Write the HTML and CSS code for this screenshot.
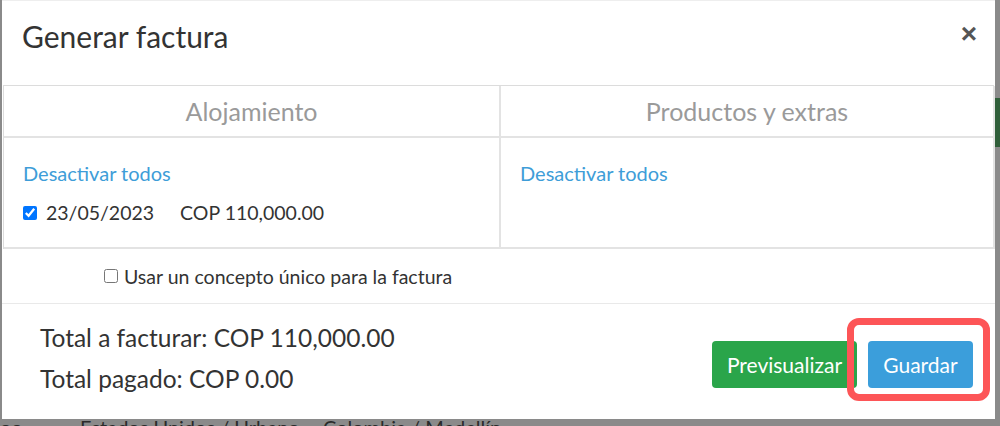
FILE: index.html
```html
<!DOCTYPE html>
<html lang="es">
<head>
<meta charset="utf-8">
<title>Generar factura</title>
<link rel="stylesheet" href="styles.css">
</head>
<body>
<div class="screen">
  <div class="gutter-left"></div>
  <div class="modal">
    <div class="modal-header">
      <h4 class="modal-title">Generar factura</h4>
      <button class="close" type="button">&times;</button>
    </div>
    <div class="tabs">
      <div class="th">Alojamiento</div>
      <div class="th">Productos y extras</div>
      <div class="td">
        <a class="link" href="#">Desactivar todos</a>
        <label class="item">
          <input type="checkbox" checked>
          <span class="date">23/05/2023</span>
          <span>COP 110,000.00</span>
        </label>
      </div>
      <div class="td">
        <a class="link" href="#">Desactivar todos</a>
      </div>
    </div>
    <div class="concept">
      <label class="concept-label"><input type="checkbox"><span>Usar un concepto único para la factura</span></label>
    </div>
    <div class="modal-footer">
      <div class="totals">
        <div class="total-line">Total a facturar: COP 110,000.00</div>
        <div class="total-line">Total pagado: COP 0.00</div>
      </div>
      <div class="actions">
        <button class="btn btn-green" type="button">Previsualizar</button>
        <span class="highlight"><button class="btn btn-blue" type="button">Guardar</button></span>
      </div>
    </div>
  </div>
  <div class="gutter-right"><div class="green-bit"></div></div>
</div>
<div class="bg-row">
  <span class="bg-a">oo</span>
  <span class="bg-b">Estados Unidos / Urbano</span>
  <span class="bg-c">Colombia / Medellín</span>
</div>
</body>
</html>
```

FILE: styles.css
```css
* { box-sizing: border-box; }
html, body {
  margin: 0;
  padding: 0;
  height: 426px;
  overflow: hidden;
}
body {
  background: #8a8a8a;
  font-family: Lato, "Open Sans", sans-serif;
  color: #333;
}
.screen {
  display: flex;
  height: 419px;
}
.gutter-left { width: 2px; flex: none; }
.gutter-right { width: 5px; flex: none; }
.green-bit {
  margin-top: 98px;
  height: 49px;
  background: #2f5e39;
}
.modal {
  width: 993px;
  flex: none;
  background: #fff;
  border-top: 1px solid #eee;
  display: flex;
  flex-direction: column;
}
.modal-header {
  height: 84px;
  display: flex;
  justify-content: space-between;
  align-items: flex-start;
  padding: 16px 18px 0 20px;
}
.modal-title {
  margin: 0;
  font-size: 30px;
  line-height: 38px;
  font-weight: 400;
  color: #333;
}
.close {
  border: 0;
  background: none;
  padding: 0;
  font-family: Arial, "Liberation Sans", sans-serif;
  font-size: 28px;
  line-height: 28px;
  font-weight: 700;
  color: #555;
  margin-top: 3px;
}
.tabs {
  margin-left: 1px;
  width: 991px;
  display: grid;
  grid-template-columns: 497px 494px;
  border-top: 1px solid #dcdcdc;
  border-left: 1px solid #dcdcdc;
}
.th, .td {
  border-right: 2px solid #e3e3e3;
  border-bottom: 2px solid #e3e3e3;
}
.th {
  height: 52px;
  display: flex;
  align-items: center;
  justify-content: center;
  font-size: 25px;
  color: #9a9a9a;
}
.td {
  height: 111px;
  padding: 22px 19px 0;
  display: flex;
  flex-direction: column;
  align-items: flex-start;
}
.link {
  color: #3e9dd8;
  text-decoration: none;
  font-size: 20px;
  line-height: 26px;
}
.item {
  margin-top: 14px;
  display: flex;
  align-items: center;
  font-size: 19.5px;
  line-height: 26px;
  color: #333;
}
.item input {
  margin: 0 9px 0 0;
  width: 14px;
  height: 14px;
}
.date { margin-right: 26px; }
.concept {
  height: 54px;
  display: flex;
  align-items: center;
  padding-left: 102px;
}
.concept-label {
  display: flex;
  align-items: center;
  font-size: 19.5px;
  color: #333;
}
.concept-label input {
  margin: 0 6px 0 0;
  width: 14px;
  height: 14px;
}
.modal-footer {
  flex: 1;
  border-top: 1px solid #e9e9e9;
  display: flex;
  justify-content: space-between;
  align-items: flex-start;
  padding: 13px 22px 0 38px;
}
.total-line {
  font-size: 24.5px;
  line-height: 41px;
  color: #333;
}
.actions {
  display: flex;
  align-items: center;
  gap: 11px;
  margin-top: 24px;
}
.btn {
  border: 0;
  border-radius: 4px;
  height: 47px;
  color: #fff;
  font-family: Lato, "Open Sans", sans-serif;
  font-size: 21px;
  padding: 0;
  cursor: pointer;
}
.btn-green { background: #2aa54a; width: 145px; }
.btn-blue { background: #3b9edb; width: 105px; }
.highlight {
  position: relative;
  display: inline-flex;
}
.highlight::after {
  content: "";
  position: absolute;
  left: -21px;
  right: -17px;
  top: -23px;
  bottom: -13px;
  border: 7px solid #fd5557;
  border-radius: 12px;
  pointer-events: none;
}
.bg-row {
  height: 7px;
  overflow: hidden;
  display: flex;
  font-size: 20px;
  line-height: 22px;
  color: #2a2a2a;
}
.bg-row span { display: block; margin-top: -3px; }
.bg-a { width: 80px; }
.bg-b { width: 243px; }
```
